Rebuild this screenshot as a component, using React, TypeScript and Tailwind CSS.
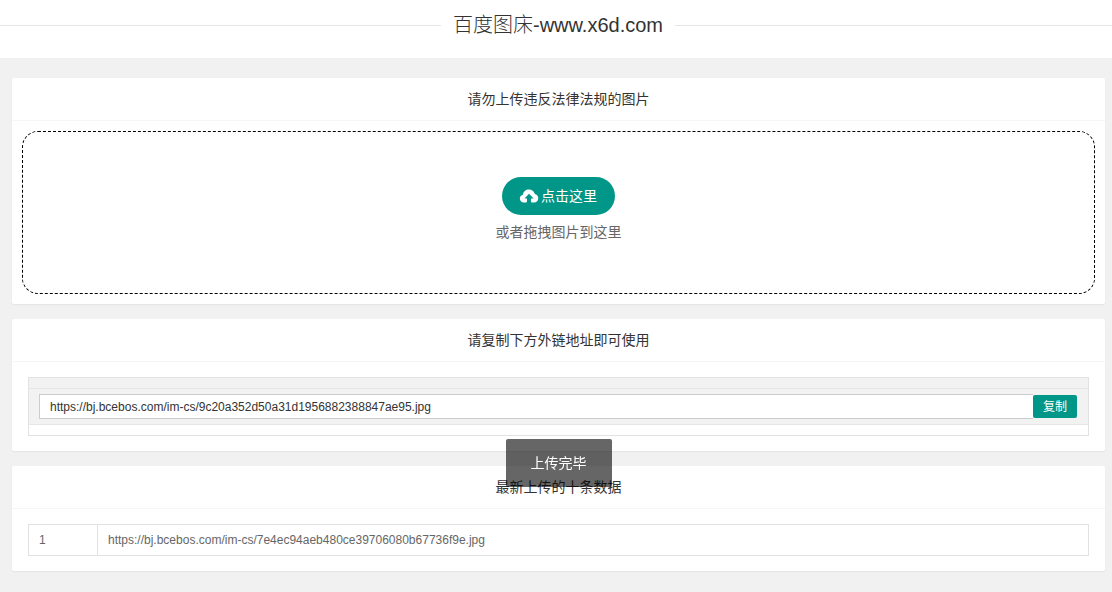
import React from 'react';

const uploadedLink = 'https://bj.bcebos.com/im-cs/9c20a352d50a31d1956882388847ae95.jpg';
const recentLinks = ['https://bj.bcebos.com/im-cs/7e4ec94aeb480ce39706080b67736f9e.jpg'];

function CloudUploadIcon() {
  return (
    <svg viewBox="0 0 20 16" className="h-4 w-5" fill="currentColor" aria-hidden="true">
      <path d="M5 14.5C2.4 14.5.8 12.8.8 10.500c0-2 1.300-3.400 3.100-3.800C4.300 3.500 6.700 1.500 9.900 1.500c2.900 0 5.200 1.700 5.900 4.500 2 .3 3.500 2 3.500 4.200 0 2.500-1.700 4.300-4.300 4.300h-1.600c-1 0-1.500-.5-1.500-1.500v-2.400h2.700L10 5.800l-4.500 4.800H8v2.400c0 1-.5 1.500-1.500 1.500z" />
    </svg>
  );
}

function Card({ title, children }: { title: string; children: React.ReactNode }) {
  return (
    <section className="rounded-[2px] bg-white shadow-[0_1px_2px_0_rgba(0,0,0,0.06)]">
      <h2 className="h-[43px] border-b border-[#f6f6f6] text-center text-sm leading-[42px] text-[#333]">{title}</h2>
      {children}
    </section>
  );
}

export default function App() {
  return (
    <div className="min-h-screen bg-[#f1f1f1] font-['Liberation_Sans','Noto_Sans_CJK_SC',sans-serif] text-sm text-[#666]">
      <header className="flex h-[58px] items-start bg-white pt-2">
        <div className="flex w-full items-center">
          <span className="h-px grow basis-1 bg-[#e6e6e6]" />
          <h1 className="px-3 text-xl leading-[34px] font-light text-[#333]">百度图床-www.x6d.com</h1>
          <span className="h-px grow basis-0 bg-[#e6e6e6]" />
        </div>
      </header>

      <main className="flex flex-col gap-[15px] pt-5 pr-[7px] pb-5 pl-3">
        <Card title="请勿上传违反法律法规的图片">
          <div className="p-[10px]">
            <div className="flex h-[163px] flex-col items-center rounded-2xl border border-dashed border-black pt-[45px]">
              <button type="button" className="flex h-[38px] items-center gap-[2px] rounded-full bg-[#009688] pr-[18px] pl-[17px] text-sm text-white">
                <CloudUploadIcon />
                点击这里
              </button>
              <p className="mt-[7px] leading-5">或者拖拽图片到这里</p>
            </div>
          </div>
        </Card>

        <Card title="请复制下方外链地址即可使用">
          <div className="px-4 py-[15px]">
            <div className="border border-[#e2e2e2]">
              <div className="h-[11px] border-b border-[#e6e6e6] bg-[#f2f2f2]" />
              <div className="flex h-9 items-center border-b border-[#e6e6e6] bg-[#f2f2f2] pr-[11px] pl-[10px]">
                <input
                  type="text"
                  readOnly
                  aria-label="外链地址"
                  defaultValue={uploadedLink}
                  className="h-[25px] min-w-0 flex-1 border border-r-0 border-[#ccc] bg-white px-[10px] text-xs text-[#333] outline-none"
                />
                <button type="button" className="h-[23px] w-11 rounded-[2px] bg-[#009688] text-xs text-white">
                  复制
                </button>
              </div>
              <div className="h-[10px]" />
            </div>
          </div>
        </Card>

        <Card title="最新上传的十条数据">
          <div className="px-4 py-[15px]">
            <table className="w-full table-fixed border-collapse text-xs">
              <tbody>
                {recentLinks.map((link, index) => (
                  <tr key={link} className="h-[31px]">
                    <td className="w-[69px] border border-[#e2e2e2] px-[10px]">{index + 1}</td>
                    <td className="border border-[#e2e2e2] px-[10px]">{link}</td>
                  </tr>
                ))}
              </tbody>
            </table>
          </div>
        </Card>
      </main>

      <div className="pointer-events-none fixed inset-x-0 top-[439px] flex justify-center pr-[7px] pl-3">
        <div role="status" className="rounded-[2px] bg-black/60 px-[25px] py-3 text-sm leading-6 text-white">
          上传完毕
        </div>
      </div>
    </div>
  );
}
